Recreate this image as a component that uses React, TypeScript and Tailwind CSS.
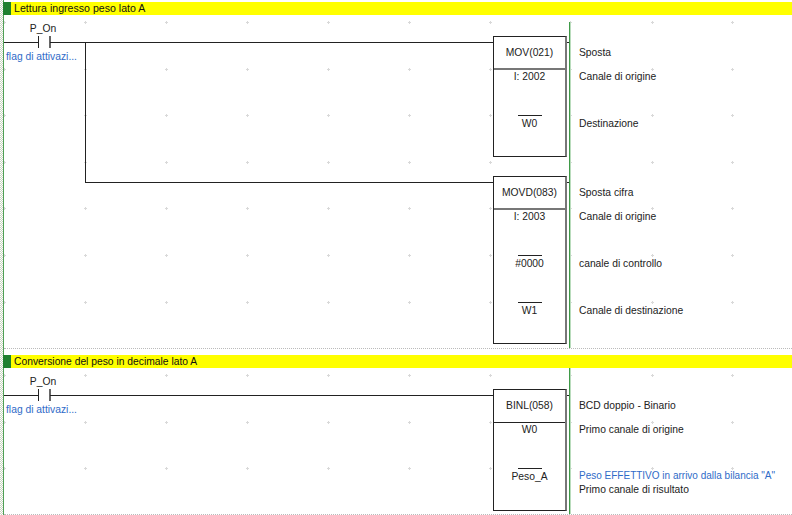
import { clsx } from "clsx";

const GRID_X = [4, 85, 166, 247, 328, 409, 490, 570, 652, 732];
const GRID_Y = [22, 69, 115, 162, 208, 255, 302, 375, 422, 468];

type Operand = { value: string; negated?: boolean; comment: string; note?: string };

type Instruction = {
  name: string;
  comment: string;
  height: number;
  thinRule?: boolean;
  operands: Operand[];
};

const MOV: Instruction = {
  name: "MOV(021)",
  comment: "Sposta",
  height: 121,
  operands: [
    { value: "I: 2002", comment: "Canale di origine" },
    { value: "W0", negated: true, comment: "Destinazione" },
  ],
};

const MOVD: Instruction = {
  name: "MOVD(083)",
  comment: "Sposta cifra",
  height: 168,
  operands: [
    { value: "I: 2003", comment: "Canale di origine" },
    { value: "#0000", negated: true, comment: "canale di controllo" },
    { value: "W1", negated: true, comment: "Canale di destinazione" },
  ],
};

const BINL: Instruction = {
  name: "BINL(058)",
  comment: "BCD doppio - Binario",
  height: 122,
  thinRule: true,
  operands: [
    { value: "W0", comment: "Primo canale di origine" },
    {
      value: "Peso_A",
      negated: true,
      note: 'Peso EFFETTIVO in arrivo dalla bilancia "A"',
      comment: "Primo canale di risultato",
    },
  ],
};

function GridMarks() {
  return (
    <svg className="absolute inset-0" width={792} height={515}>
      {GRID_X.flatMap((x) =>
        GRID_Y.map((y) => (
          <path
            key={`${x}-${y}`}
            d={`M${x - 1} ${y + 0.5}h3M${x + 0.5} ${y - 1}v3`}
            stroke="#d9d9d9"
            strokeWidth={1}
          />
        )),
      )}
    </svg>
  );
}

function Header({ title, wide }: { title: string; wide?: boolean }) {
  return (
    <div className="flex h-[13px] items-center bg-[#ffff00]">
      <div className="-ml-px h-full w-[8px] shrink-0 bg-[#1f7f2f]" />
      <span className={clsx("ml-[3px] text-[#111]", wide && "text-[10.6px]")}>{title}</span>
    </div>
  );
}

// normally open contact sitting on the left power rail
function Contact() {
  return (
    <div className="absolute left-0 top-[20px] flex flex-col">
      <div className="w-[78px] text-center leading-[14px]">P_On</div>
      <div className="ml-[34px] flex h-[12px] gap-[10px]">
        <div className="w-px bg-[#222]" />
        <div className="w-[2px] bg-[#666]" />
      </div>
      <div className="ml-[2px] mt-[2px] leading-[14px] text-[#2f6bc8]">flag di attivazi...</div>
    </div>
  );
}

function Wire({ left, top, width, height }: { left: number; top: number; width: number; height: number }) {
  return <div className="absolute bg-[#222]" style={{ left, top, width, height }} />;
}

function Block({ item, top }: { item: Instruction; top: number }) {
  return (
    <div className="absolute left-[489px] flex" style={{ top }}>
      <div
        className="w-[74px] shrink-0 overflow-hidden border border-r-2 border-[#222] border-r-[#777] bg-white"
        style={{ height: item.height }}
      >
        <div
          className={clsx(
            "flex h-[33px] items-center justify-center",
            item.thinRule ? "border-b border-[#222]" : "border-b-2 border-[#777]",
          )}
        >
          {item.name}
        </div>
        {item.operands.map((op) => (
          <div key={op.value} className="flex h-[47px] flex-col items-center">
            <div className={clsx("-mt-[2px] h-px w-[24px]", op.negated && "bg-[#222]")} />
            <span className="mt-px leading-[14px]">{op.value}</span>
          </div>
        ))}
      </div>
      <div className="ml-[12px] w-[215px] shrink-0">
        <div className="flex h-[33px] items-center">{item.comment}</div>
        {item.operands.map((op) => (
          <div key={op.value} className="h-[47px] leading-[13px]">
            {op.note && <div className="text-[10px] text-[#2f6bc8]">{op.note}</div>}
            <div className="pt-px">{op.comment}</div>
          </div>
        ))}
      </div>
    </div>
  );
}

export default function App() {
  return (
    <div
      className="relative flex h-[515px] w-[792px] overflow-hidden bg-white text-[10.3px] text-[#222]"
      style={{ fontFamily: '"Liberation Sans", Arial, sans-serif' }}
    >
      <GridMarks />
      <div className="h-full w-[3px] shrink-0 bg-[repeating-conic-gradient(#c9d4c0_0%_25%,#ffffff_0%_50%)] bg-[length:2px_2px]" />
      <div className="relative h-full w-px shrink-0 bg-[#4f9f55]" />
      <div className="relative flex-1 pt-[2px]">
        <section className="relative h-[347px] border-b border-dotted border-[#bbb]">
          <Header title="Lettura ingresso peso lato A" wide />
          <div className="absolute bottom-0 left-[565px] top-[20px] w-[2px] border-r border-[#b9dcbc] bg-[#3f9a48]" />
          <Contact />
          <Wire left={0} top={40} width={34} height={1} />
          <Wire left={46} top={40} width={443} height={1} />
          <Wire left={81} top={40} width={1} height={141} />
          <Wire left={81} top={180} width={408} height={1} />
          <Wire left={562} top={40} width={3} height={1} />
          <Wire left={562} top={180} width={3} height={1} />
          <Block item={MOV} top={34} />
          <Block item={MOVD} top={174} />
        </section>
        <section className="relative mt-[6px] h-[160px] border-b border-dotted border-[#bbb]">
          <Header title="Conversione del peso in decimale lato A" />
          <div className="absolute bottom-0 left-[565px] top-[13px] w-[2px] border-r border-[#b9dcbc] bg-[#3f9a48]" />
          <Contact />
          <Wire left={0} top={40} width={34} height={1} />
          <Wire left={46} top={40} width={443} height={1} />
          <Wire left={562} top={40} width={3} height={1} />
          <Block item={BINL} top={34} />
        </section>
      </div>
    </div>
  );
}
